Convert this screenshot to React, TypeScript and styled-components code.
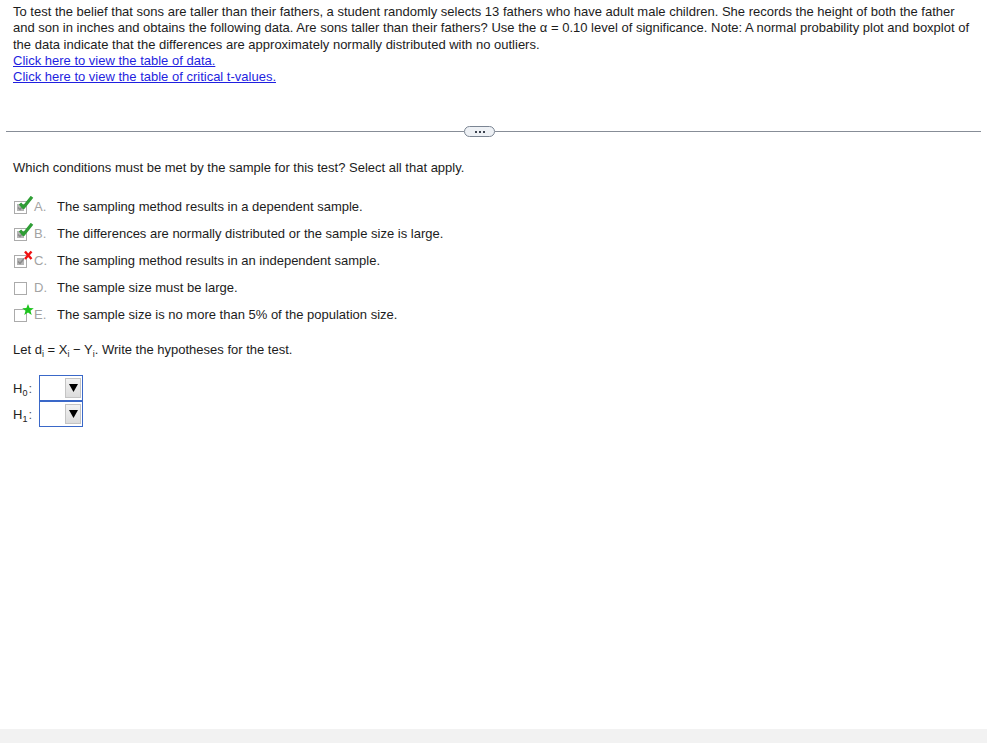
import React from "react";
import styled, { createGlobalStyle } from "styled-components";

const GlobalStyle = createGlobalStyle`
  html, body {
    margin: 0;
    padding: 0;
    background: #ffffff;
  }
  body {
    font-family: "Liberation Sans", Arial, sans-serif;
    font-size: 13px;
    color: #1c1c1c;
  }
`;

const Page = styled.div`
  display: flex;
  flex-direction: column;
  min-height: 100vh;
`;

const Content = styled.div`
  flex: 1;
`;

const Footer = styled.div`
  height: 14px;
  background: #f2f2f2;
`;

const Intro = styled.div`
  padding: 4px 10px 0 13px;
  line-height: 16.25px;
`;

const Link = styled.a`
  display: block;
  color: #1f1fe0;
  text-decoration: underline;
  cursor: pointer;
`;

const Divider = styled.div`
  display: flex;
  align-items: center;
  margin: 41px 6px 0 6px;
  height: 11px;
`;

const Line = styled.div<{ $left?: boolean }>`
  height: 1px;
  background: #878d97;
  ${(p) => (p.$left ? "flex: 0 0 458px;" : "flex: 1;")}
`;

const Pill = styled.div`
  box-sizing: border-box;
  width: 31px;
  height: 11px;
  border: 1px solid #7b8593;
  border-radius: 6px;
  background: #eef1f5;
  display: flex;
  align-items: center;
  justify-content: center;
  gap: 2px;
`;

const Dot = styled.span`
  width: 2px;
  height: 2px;
  background: #3d4450;
`;

const Question = styled.p`
  margin: 23px 0 0 13px;
  line-height: 16px;
`;

const Options = styled.div`
  margin-top: 17px;
  margin-left: 14px;
`;

const OptionRow = styled.div`
  display: flex;
  align-items: center;
  height: 27px;
`;

const Letter = styled.span`
  width: 23px;
  color: #a3a3a3;
`;

const IconBox = styled.svg`
  display: block;
  width: 20px;
  height: 18px;
  margin-top: -4px;
`;

const Prompt = styled.p`
  margin: 14px 0 0 13px;
  line-height: 16px;
`;

const Sub = styled.sub`
  font-size: 9px;
  vertical-align: -3px;
  line-height: 0;
`;

const Hypotheses = styled.div`
  margin: 17px 0 0 13px;
  display: flex;
  flex-direction: column;
`;

const HypRow = styled.div`
  display: flex;
  align-items: center;
`;

const HypLabel = styled.span`
  width: 26px;
  color: #222;
`;

const Colon = styled.span`
  color: #555;
  margin-left: 1px;
`;

const Select = styled.div`
  box-sizing: border-box;
  width: 44px;
  height: 26px;
  border: 1px solid #3a68c8;
  display: flex;
  align-items: center;
  justify-content: flex-end;
  padding-right: 1px;
`;

const SelectButton = styled.div`
  box-sizing: border-box;
  width: 16px;
  height: 20px;
  background: linear-gradient(#f2f2f2, #dcdcdc);
  border: 1px solid #c4c4c4;
  display: flex;
  align-items: center;
  justify-content: center;
`;

type Mark = "check" | "cross" | "star" | "none";

interface Option {
  letter: string;
  text: string;
  checked: boolean;
  mark: Mark;
}

const options: Option[] = [
  { letter: "A.", text: "The sampling method results in a dependent sample.", checked: true, mark: "check" },
  { letter: "B.", text: "The differences are normally distributed or the sample size is large.", checked: true, mark: "check" },
  { letter: "C.", text: "The sampling method results in an independent sample.", checked: true, mark: "cross" },
  { letter: "D.", text: "The sample size must be large.", checked: false, mark: "none" },
  { letter: "E.", text: "The sample size is no more than 5% of the population size.", checked: false, mark: "star" },
];

// checkbox drawing with the grading mark on top
const CheckIcon: React.FC<{ checked: boolean; mark: Mark }> = ({ checked, mark }) => (
  <IconBox viewBox="0 0 20 18">
    <rect x="0.5" y="5.5" width="12" height="12" fill="#fff" stroke="#ababab" />
    {checked && (
      <>
        <rect x="3" y="8" width="7" height="7" fill="#b5b5b5" />
        <path d="M4 11.5 L6 13.5 L10 8.5" fill="none" stroke="#8a8a8a" strokeWidth="1.5" />
      </>
    )}
    {mark === "check" && (
      <path d="M6 7.5 L9.5 11.5 L18 0.8" fill="none" stroke="#2f9e35" strokeWidth="3.2" strokeLinejoin="round" />
    )}
    {mark === "cross" && (
      <path d="M11 1.5 L17.5 9 M17.5 1.5 L11 9" stroke="#f01010" strokeWidth="2.4" />
    )}
    {mark === "star" && (
      <polygon
        points="14,0 15.6,4 19.8,4.2 16.5,6.8 17.7,11 14,8.6 10.3,11 11.5,6.8 8.2,4.2 12.4,4"
        fill="#1fc41f"
      />
    )}
  </IconBox>
);

const Dropdown: React.FC = () => (
  <Select>
    <SelectButton>
      <svg width="9" height="8" viewBox="0 0 9 8">
        <polygon points="0,0 9,0 4.5,8" fill="#000" />
      </svg>
    </SelectButton>
  </Select>
);

const App: React.FC = () => {
  return (
    <Page>
      <GlobalStyle />
      <Content>
        <Intro>
          To test the belief that sons are taller than their fathers, a student randomly selects 13 fathers who have
          adult male children. She records the height of both the father and son in inches and obtains the following
          data. Are sons taller than their fathers? Use the α = 0.10 level of significance. Note: A normal probability
          plot and boxplot of the data indicate that the differences are approximately normally distributed with no
          outliers.
          <Link>Click here to view the table of data.</Link>
          <Link>Click here to view the table of critical t-values.</Link>
        </Intro>

        <Divider>
          <Line $left />
          <Pill>
            <Dot />
            <Dot />
            <Dot />
          </Pill>
          <Line />
        </Divider>

        <Question>Which conditions must be met by the sample for this test? Select all that apply.</Question>

        <Options>
          {options.map((o) => (
            <OptionRow key={o.letter}>
              <CheckIcon checked={o.checked} mark={o.mark} />
              <Letter>{o.letter}</Letter>
              <span>{o.text}</span>
            </OptionRow>
          ))}
        </Options>

        <Prompt>
          Let d<Sub>i</Sub> = X<Sub>i</Sub> − Y<Sub>i</Sub>. Write the hypotheses for the test.
        </Prompt>

        <Hypotheses>
          <HypRow>
            <HypLabel>
              H<Sub>0</Sub>
              <Colon>:</Colon>
            </HypLabel>
            <Dropdown />
          </HypRow>
          <HypRow>
            <HypLabel>
              H<Sub>1</Sub>
              <Colon>:</Colon>
            </HypLabel>
            <Dropdown />
          </HypRow>
        </Hypotheses>
      </Content>
      <Footer />
    </Page>
  );
};

export default App;
